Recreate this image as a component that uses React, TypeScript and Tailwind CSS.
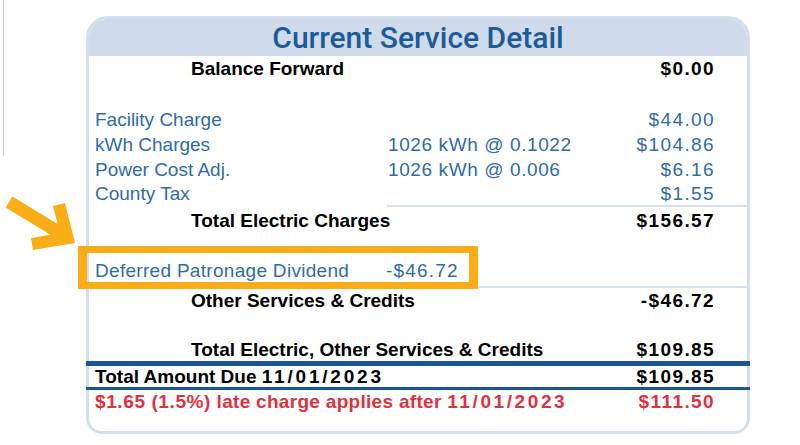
import React from "react";

const blue = "text-[#2e6cab]";
const amt = "tracking-[1.4px]";

function Row({
  label,
  mid,
  amount,
  h,
  bold,
  color,
}: {
  label: React.ReactNode;
  mid?: React.ReactNode;
  amount?: React.ReactNode;
  h: string;
  bold?: boolean;
  color: string;
}) {
  return (
    <div className={`flex items-center ${h} ${color} text-[19px] leading-none ${bold ? "font-bold" : ""}`}>
      <div className={`${bold ? "pl-[102px] w-[299px]" : "pl-[6px] w-[299px]"} whitespace-nowrap`}>{label}</div>
      <div className="flex-1 whitespace-nowrap tracking-[0.6px]">{mid}</div>
      <div className={`pr-[32px] whitespace-nowrap ${amt}`}>{amount}</div>
    </div>
  );
}

export default function App() {
  return (
    <div
      className="relative flex h-[445px] w-[800px] overflow-hidden bg-white pt-[16px]"
      style={{ fontFamily: '"Liberation Sans", Arial, sans-serif' }}
    >
      <div className="-mt-[16px] ml-[3px] h-[156px] w-px bg-[#d2d2d2]" />
      <div className="ml-[82px] flex h-[418px] w-[664px] flex-col rounded-t-[22px] rounded-b-[16px] border-[3px] border-[#d4dfee]">
        <div className="flex h-[37px] items-center justify-center rounded-t-[19px] bg-[#cfdaeb]">
          <span
            className="text-[30px] font-medium leading-none text-[#1d5a98]"
            style={{ fontFamily: "Roboto, 'Liberation Sans', sans-serif" }}
          >
            Current Service Detail
          </span>
        </div>
        <Row h="h-[25px]" bold color="text-black" label="Balance Forward" amount="$0.00" />
        <div className="h-[26px]" />
        <Row h="h-[25px]" color={blue} label="Facility Charge" amount="$44.00" />
        <Row h="h-[25px]" color={blue} label="kWh Charges" mid="1026 kWh @ 0.1022" amount="$104.86" />
        <Row h="h-[25px]" color={blue} label="Power Cost Adj." mid="1026 kWh @ 0.006" amount="$6.16" />
        <Row h="h-[23px]" color={blue} label="County Tax" amount="$1.55" />
        <div className="ml-[298px] h-[2px] bg-[#d6e0ef]" />
        <Row h="h-[26px]" bold color="text-black" label="Total Electric Charges" amount="$156.57" />
        <div className="h-[25px]" />
        <Row
          h="h-[24px]"
          color={blue}
          label={<span className="tracking-[0.3px]">Deferred Patronage Dividend</span>}
          mid={<span className="-ml-[2px] tracking-[1.2px]">-$46.72</span>}
        />
        <div className="h-[4px]" />
        <div className="ml-[389px] h-[2px] bg-[#d6e0ef]" />
        <Row h="h-[24px]" bold color="text-black" label="Other Services & Credits" amount="-$46.72" />
        <div className="h-[26px]" />
        <div className="flex h-[23px] items-center text-[19px] font-bold leading-none text-black">
          <div className="flex-1 whitespace-nowrap pl-[102px]">Total Electric, Other Services &amp; Credits</div>
          <div className={`pr-[32px] ${amt}`}>$109.85</div>
        </div>
        <div className="-mx-[3px] h-[5px] bg-[#1a5592]" />
        <div className="flex h-[21px] items-center text-[19px] font-bold leading-none text-black">
          <div className="flex-1 whitespace-nowrap pl-[6px]">
            Total Amount Due <span className="tracking-[2.8px]">11/01/2023</span>
          </div>
          <div className={`pr-[32px] ${amt}`}>$109.85</div>
        </div>
        <div className="-mx-[3px] h-[3px] bg-[#1a5592]" />
        <div className="flex h-[23px] items-center text-[19px] font-bold leading-none text-[#e0323e]">
          <div className="flex-1 whitespace-nowrap pl-[6px] tracking-[0.3px]">
            <span className="tracking-[0.6px]">$1.65 (1.5%)</span> late charge applies after{" "}
            <span className="tracking-[2.6px]">11/01/2023</span>
          </div>
          <div className={`pr-[32px] ${amt}`}>$111.50</div>
        </div>
      </div>

      <svg className="absolute left-0 top-[190px]" width="85" height="65" viewBox="0 0 85 65">
        <line x1="9" y1="12" x2="60" y2="43" stroke="#fbad18" strokeWidth="13" />
        <polygon points="53,16 65,13 75,53 33,60 31,48 60,43" fill="#fbad18" />
      </svg>
      <div className="absolute left-[78px] top-[246px] h-[43px] w-[400px] border-x-[9px] border-y-[7px] border-[#fbad18]" />
    </div>
  );
}
